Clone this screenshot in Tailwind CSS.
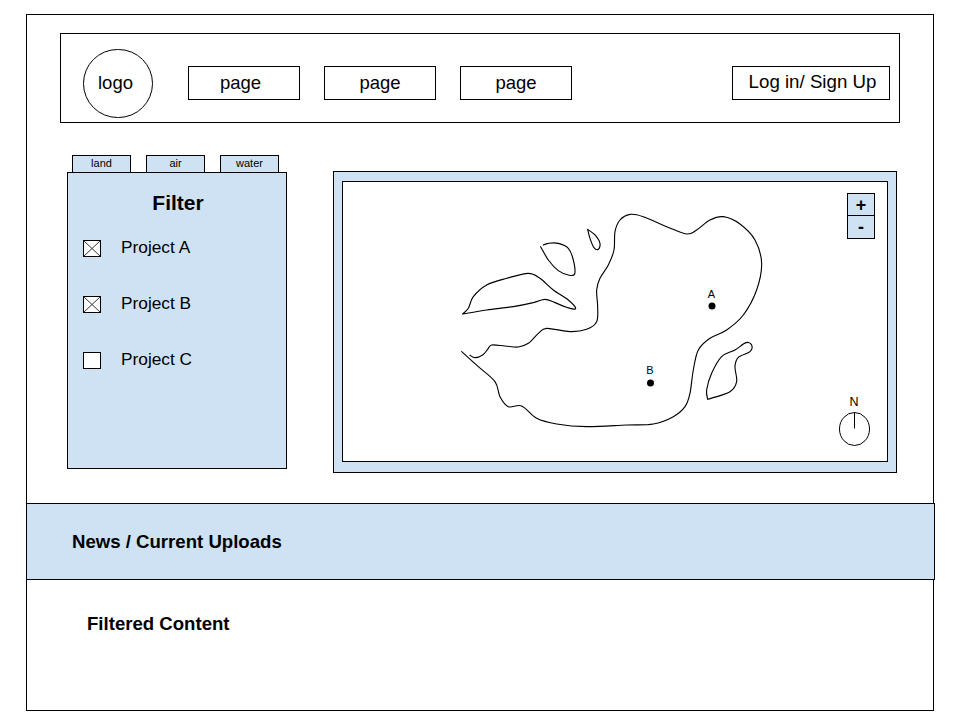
<!DOCTYPE html>
<html lang="en">
  <head>
    <meta charset="UTF-8" />
    <title>Wireframe</title>
    <script src="https://cdn.jsdelivr.net/npm/@tailwindcss/browser@4"></script>
  </head>
  <body class="bg-white text-black font-['Liberation_Sans',Arial,sans-serif]">
    <div class="ml-[26px] mt-[14px] w-[908px] h-[697px] border border-black">
      <!-- nav -->
      <header class="ml-[33px] mt-[18px] w-[840px] h-[90px] border border-black flex items-center pt-[10px]">
        <div class="ml-[22px] w-[70px] h-[69px] rounded-full border border-black flex items-center justify-center text-[18.5px] pr-[5px]">logo</div>
        <a class="ml-[35px] w-[112px] h-[34px] border border-black flex items-center justify-center text-[18.5px] pr-[7px]">page</a>
        <a class="ml-[24px] w-[112px] h-[34px] border border-black flex items-center justify-center text-[18.5px]">page</a>
        <a class="ml-[24px] w-[112px] h-[34px] border border-black flex items-center justify-center text-[18.5px]">page</a>
        <a class="ml-auto mr-[9px] w-[158px] h-[34px] border border-black flex items-center justify-center text-[18.7px] pb-[2px] pl-[3px]">Log in/ Sign Up</a>
      </header>

      <div class="flex mt-[32px] ml-[40px]">
        <!-- filter -->
        <div class="w-[220px]">
          <div class="flex gap-[15px] pl-[5px]">
            <div class="w-[59px] h-[18px] border border-black bg-[#cfe2f3] flex items-center justify-center text-[11px] pb-[1px]">land</div>
            <div class="w-[59px] h-[18px] border border-black bg-[#cfe2f3] flex items-center justify-center text-[11px] pb-[1px]">air</div>
            <div class="w-[59px] h-[18px] border border-black bg-[#cfe2f3] flex items-center justify-center text-[11px] pb-[1px]">water</div>
          </div>
          <div class="-mt-px h-[297px] border border-black bg-[#cfe2f3] pl-[15px] pt-[18px]">
            <h2 class="text-[21px] leading-[24px] font-bold text-center pr-[13px] mb-[21px]">Filter</h2>
            <div class="flex flex-col gap-[32px]">
              <label class="flex items-center h-[24px] text-[17.3px]">
                <svg class="w-[18px] h-[17px] bg-white border border-black" viewBox="0 0 16 15"><path d="M0 0L16 15M16 0L0 15" stroke="#333" stroke-width="1" fill="none" /></svg>
                <span class="ml-[20px]">Project A</span>
              </label>
              <label class="flex items-center h-[24px] text-[17.3px]">
                <svg class="w-[18px] h-[17px] bg-white border border-black" viewBox="0 0 16 15"><path d="M0 0L16 15M16 0L0 15" stroke="#333" stroke-width="1" fill="none" /></svg>
                <span class="ml-[20px]">Project B</span>
              </label>
              <label class="flex items-center h-[24px] text-[17.3px]">
                <span class="w-[18px] h-[17px] bg-white border border-black"></span>
                <span class="ml-[20px]">Project C</span>
              </label>
            </div>
          </div>
        </div>

        <!-- map -->
        <div class="ml-[46px] mt-[16px] w-[564px] h-[302px] border border-black bg-[#cfe2f3] pl-[8px] pt-[9px]">
          <div class="relative w-[546px] h-[281px] border border-black bg-white">
            <svg class="absolute -left-px -top-px w-[546px] h-[281px]" viewBox="342 181 546 281" fill="none">
              <g transform="translate(440 200) scale(0.3333)" stroke="#000" stroke-width="3.4" stroke-linejoin="round" stroke-linecap="round">
                <path id="coast" />
                <path id="leaf" />
                <path id="isle" />
                <path id="drop" />
                <path id="east" />
              </g>
              <circle cx="712" cy="306" r="3.5" fill="#000" />
              <circle cx="650.5" cy="383" r="3.5" fill="#000" />
              <text x="711.5" y="298" text-anchor="middle" font-size="11" fill="#000">A</text>
              <text x="650" y="374" text-anchor="middle" font-size="11" fill="#000">B</text>
              <ellipse cx="854.5" cy="429" rx="15" ry="16.5" stroke="#000" />
              <path d="M854.5 412.5V428.5" stroke="#000" />
              <text x="854" y="406" text-anchor="middle" font-size="12.5" fill="#000">N</text>
            </svg>
            <!-- zoom buttons -->
            <div class="absolute left-[504px] top-[11px] w-[28px] h-[46px] border border-black bg-[#cfe2f3] flex flex-col">
              <div class="h-[22px] border-b border-black flex items-center justify-center text-[18px] leading-none font-bold">+</div>
              <div class="flex-1 flex items-center justify-center text-[18px] leading-none font-bold">-</div>
            </div>
          </div>
        </div>
      </div>

      <!-- news -->
      <section class="-ml-px mt-[30px] w-[909px] h-[77px] border border-black bg-[#cfe2f3] flex items-center pl-[45px] pt-[1px] text-[18.6px] font-bold">News / Current Uploads</section>
      <p class="ml-[60px] mt-[33px] text-[18.6px] leading-[22px] font-bold">Filtered Content</p>
    </div>

    <script>
      // smooth outlines through hand-picked points
      const shapes = {
        coast: [[65,455],[115,500],[165,545],[180,590],[205,620],[245,618],[290,655],[350,672],[440,680],[560,675],[640,672],[700,650],[735,620],[750,580],[760,510],[775,450],[810,415],[860,390],[910,345],[950,270],[965,190],[945,120],[900,72],[850,50],[810,60],[770,90],[740,102],[680,80],[610,50],[570,43],[540,60],[525,95],[522,150],[505,195],[480,235],[470,270],[473,320],[470,365],[440,388],[390,395],[320,385],[295,400],[265,430],[235,441],[195,438],[155,435],[143,448],[128,465],[105,473],[90,466]],
        leaf: [[68,342],[85,325],[100,290],[140,255],[200,235],[265,220],[300,235],[340,270],[385,300],[407,326],[380,322],[345,308],[315,298],[280,308],[220,320],[140,330],[68,342]],
        isle: [[302,140],[325,180],[355,212],[385,225],[404,222],[400,180],[385,145],[355,130],[325,130],[310,135]],
        drop: [[443,88],[450,115],[462,143],[475,148],[480,130],[465,105],[443,88]],
        east: [[803,598],[800,570],[815,520],[845,470],[885,450],[918,428],[935,435],[930,455],[895,472],[885,500],[890,545],[870,575],[803,598]],
      };

      function smooth(pts) {
        let d = `M${pts[0][0]} ${pts[0][1]}`;
        for (let i = 0; i < pts.length - 1; i++) {
          const p0 = pts[i - 1] || pts[i];
          const p1 = pts[i];
          const p2 = pts[i + 1];
          const p3 = pts[i + 2] || p2;
          d += `C${p1[0] + (p2[0] - p0[0]) / 6} ${p1[1] + (p2[1] - p0[1]) / 6} ${p2[0] - (p3[0] - p1[0]) / 6} ${p2[1] - (p3[1] - p1[1]) / 6} ${p2[0]} ${p2[1]}`;
        }
        return d;
      }

      for (const id in shapes) {
        document.getElementById(id).setAttribute("d", smooth(shapes[id]));
      }
    </script>
  </body>
</html>
